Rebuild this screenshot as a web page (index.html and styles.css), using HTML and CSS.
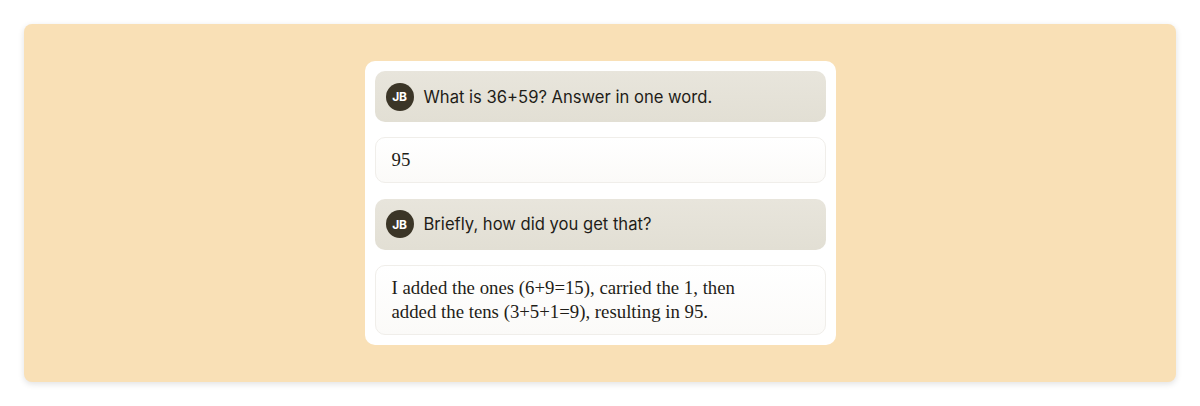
FILE: index.html
```html
<!DOCTYPE html>
<html>
<head>
<meta charset="utf-8">
<link rel="stylesheet" href="styles.css">
</head>
<body>
<div class="stage">
  <div class="chat">
    <div class="user">
      <span class="avatar">JB</span>
      <span class="utext">What is 36+59? Answer in one word.</span>
    </div>
    <div class="reply">95</div>
    <div class="user">
      <span class="avatar">JB</span>
      <span class="utext">Briefly, how did you get that?</span>
    </div>
    <div class="reply">I added the ones (6+9=15), carried the 1, then<br>added the tens (3+5+1=9), resulting in 95.</div>
  </div>
</div>
</body>
</html>
```
FILE: styles.css
```css
* { box-sizing: border-box; }
html, body { margin: 0; background: #ffffff; }
body { padding: 24px; }
.stage {
  height: 358px;
  background: #f9e0b6;
  border-radius: 8px;
  box-shadow: 0 2px 6px rgba(0,0,0,0.12);
  display: flex;
  align-items: center;
  justify-content: center;
}
.chat {
  width: 471px;
  background: #ffffff;
  border-radius: 10px;
  padding: 10px 10px 10px;
  display: flex;
  flex-direction: column;
  gap: 16px;
}
.user {
  height: 51px;
  background: linear-gradient(180deg, #e8e5dc, #e2dfd4);
  border-radius: 10px;
  display: flex;
  align-items: center;
  padding-left: 11px;
  gap: 10px;
}
.user + .reply { margin-top: -1px; }
.avatar {
  width: 28px;
  height: 28px;
  border-radius: 50%;
  background: #3b3527;
  color: #fff;
  font-family: "Inter", sans-serif;
  font-weight: 700;
  font-size: 12px;
  display: flex;
  align-items: center;
  justify-content: center;
  letter-spacing: -0.2px;
}
.utext {
  font-family: "Inter", sans-serif;
  font-size: 16.6px;
  color: #1f1d18;
}
.reply {
  border: 1px solid #f0eeea;
  border-radius: 10px;
  background: linear-gradient(180deg, #ffffff, #fbfaf8);
  padding: 10px 16px 9px;
  font-family: "Liberation Serif", serif;
  font-size: 18.8px;
  line-height: 24.5px;
  color: #1f1d18;
}
```
